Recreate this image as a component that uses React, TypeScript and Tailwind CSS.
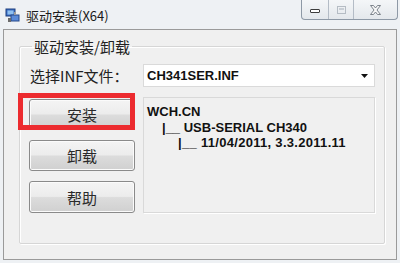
const cjk = "font-['Noto_Sans_CJK_SC','Noto_Sans',sans-serif]";
const tahoma = "font-['Liberation_Sans','DejaVu_Sans',sans-serif]";

const btn =
  "h-[31px] w-full rounded-[3px] border border-[#8a8a8a] bg-[linear-gradient(to_bottom,#f4f4f4_0%,#ececec_48%,#dcdcdc_52%,#d0d0d0_100%)] shadow-[inset_0_0_0_1px_#fbfbfb] text-[15px] text-[#2a2a2a] leading-none";

const AppIcon = () => (
  <svg width="16" height="16" viewBox="0 0 16 16">
    <rect x="1" y="2" width="9" height="7" fill="#3b6fc4" stroke="#1c3f7f" strokeWidth="1" />
    <rect x="2.5" y="3.5" width="6" height="4" fill="#8fc0f0" />
    <rect x="6" y="8" width="8" height="6" fill="#5a8ad8" stroke="#24488a" strokeWidth="1" />
    <rect x="3" y="11" width="3" height="4" fill="#6b6b6b" />
    <rect x="9" y="5" width="2" height="3" fill="#9a9a9a" />
  </svg>
);

export default function App() {
  const lines = [
    { text: "WCH.CN", pad: "pl-[3px]" },
    { text: "|__ USB-SERIAL CH340", pad: "pl-[18px]" },
    { text: "|__ 11/04/2011, 3.3.2011.11", pad: "pl-[34px] tracking-[0.3px]" },
  ];

  return (
    <div className={`w-[400px] h-[263px] bg-[#eef1f4] flex flex-col ${cjk}`}>
      {/* Title bar */}
      <div className="h-[29px] flex items-start shrink-0">
        <div className="flex items-center gap-[5px] pl-[5px] pt-[7px]">
          <AppIcon />
          <span className="text-[13px] text-[#1a1a1a] leading-none">驱动安装(X64)</span>
        </div>
        <div className="ml-auto mr-[2px] flex h-[20px] border border-t-0 border-[#8e99a6] rounded-b-[4px] overflow-hidden bg-[linear-gradient(to_bottom,#f4f6f8,#e4e8ec)]">
          <div className="w-[27px] flex items-center justify-center border-r border-[#b4bcc6]">
            <div className="w-[10px] h-[4px] mt-[3px] rounded-[1px] border border-[#3d3d3d] bg-white" />
          </div>
          <div className="w-[25px] flex items-center justify-center border-r border-[#b4bcc6]">
            <div className="w-[9px] h-[8px] border border-[#b5bcc4] p-[1px]">
              <div className="w-full h-full border-t-2 border-[#c8ced5]" />
            </div>
          </div>
          <div className="w-[43px] flex items-center justify-center">
            <svg width="11" height="10" viewBox="0 0 11 10">
              <path
                d="M0.5 0.5h3l2 2.5 2-2.5h3l-3.5 4.5 3.5 4.5h-3l-2-2.5-2 2.5h-3l3.5-4.5z"
                fill="#f7f7f7"
                stroke="#6f7780"
                strokeWidth="0.9"
              />
            </svg>
          </div>
        </div>
      </div>

      {/* Client area */}
      <div className="ml-[3px] w-[394px] h-[231px] border border-[#9a9a9a] bg-[#f0f0f0]">
        <fieldset className="ml-[15px] mt-[9px] w-[366px] h-[205px] border border-[#d6d6d6] rounded-[2px] shadow-[1px_1px_0_#ffffff,inset_1px_1px_0_#ffffff] pl-[9px] pr-[9px] pt-[10px]">
          <legend className="ml-[3px] px-[2px] text-[15px] leading-[15px] text-[#222]">驱动安装/卸载</legend>

          <div className="grid grid-cols-[106px_232px] gap-x-[8px]">
            <div className="flex items-center pl-[1px] text-[15px] text-[#222] leading-none">选择INF文件：</div>
            <div className="h-[23px] bg-white border border-[#dadada] flex items-center pl-[3px] pr-[6px]">
              <span className={`${tahoma} font-bold text-[13px] text-[#111]`}>CH341SER.INF</span>
              <svg className="ml-auto" width="7" height="4" viewBox="0 0 7 4">
                <path d="M0 0h7L3.5 4z" fill="#111" />
              </svg>
            </div>

            <div className="mt-[10px] pt-[2px] flex flex-col gap-[10px]">
              <div className="relative">
                <button className={btn}>安装</button>
                <div className="absolute left-[-11px] top-[-6px] w-[117px] h-[37px] border-[5px] border-[#ec2b2f]" />
              </div>
              <button className={btn}>卸载</button>
              <button className={`${btn} h-[32px]`}>帮助</button>
            </div>

            <div className={`mt-[10px] h-[116px] border border-[#d9d9d9] shadow-[1px_1px_0_#ffffff] pt-[6px] ${tahoma} font-bold text-[13px] leading-[15.5px] text-[#111]`}>
              {lines.map((l) => (
                <div key={l.text} className={`${l.pad} whitespace-pre`}>
                  {l.text}
                </div>
              ))}
            </div>
          </div>
        </fieldset>
      </div>
    </div>
  );
}
